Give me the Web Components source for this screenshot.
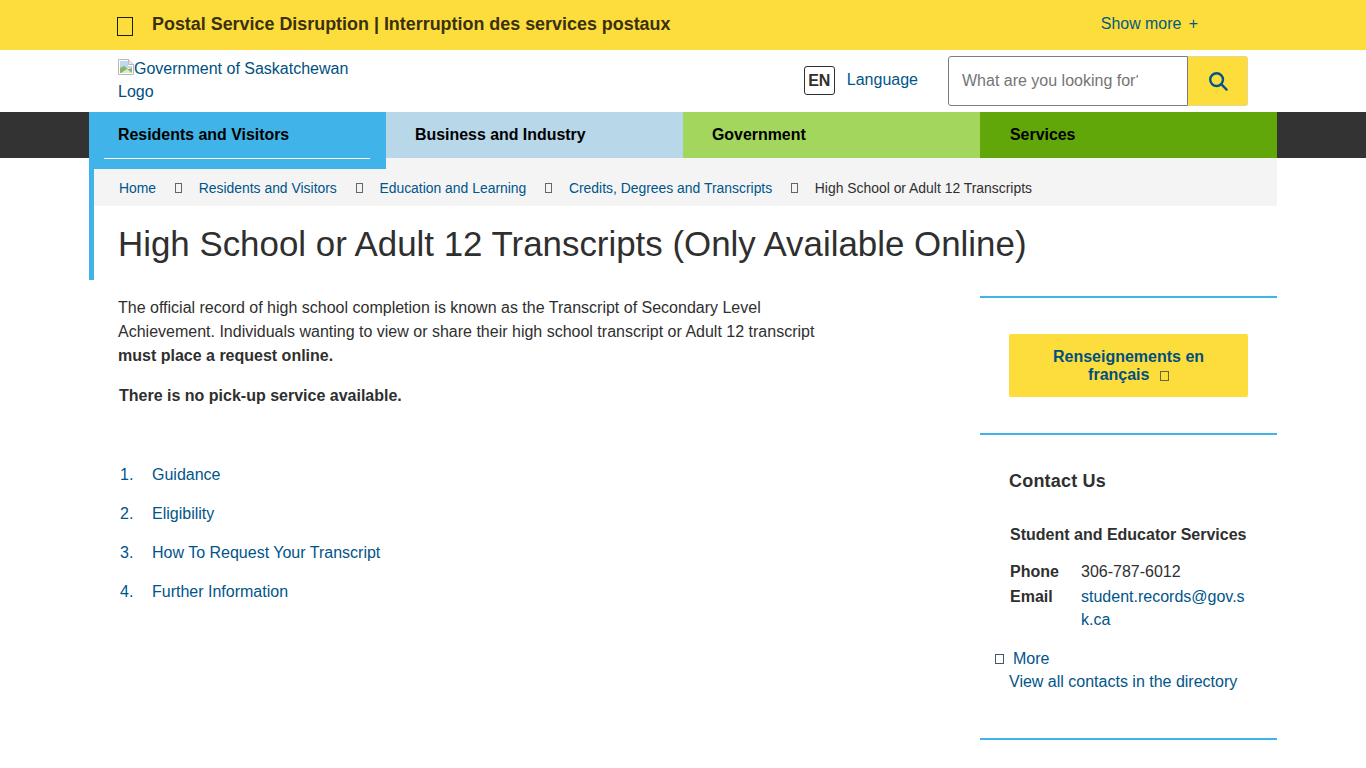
<!DOCTYPE html>
<html lang="en">
<head>
<meta charset="utf-8">
<title>High School or Adult 12 Transcripts</title>
<style>
	html, body {
		margin: 0;
		background: #fff;
		color: #2f2f2f;
		font: 16px/24px "Liberation Sans", Arial, sans-serif;
		height: 768px;
		overflow: hidden;
	}
</style>
</head>
<body>
<gov-alert></gov-alert>
<gov-header></gov-header>
<gov-nav></gov-nav>
<gov-title></gov-title>
<gov-main>
	<gov-article></gov-article>
	<gov-sidebar slot="side"></gov-sidebar>
</gov-main>

<script>
const define = (name, html) => {
	customElements.define(name, class extends HTMLElement {
		constructor() {
			super()
			this.attachShadow({mode: 'open'}).innerHTML = html
		}
	})
}

// missing-glyph box, the icon font of the original did not load
define('tofu-box', `
	<style>
		:host {
			display: inline-block;
			box-sizing: border-box;
			width: var(--w, 8px);
			height: var(--h, 11px);
			border: 1px solid currentColor;
			vertical-align: -1px;
		}
	</style>
`)

define('gov-alert', `
	<style>
		:host {
			display: flex;
			align-items: center;
			height: 48px;
			padding: 0 168px 2px 117px;
			background: #fddd3c;
		}
		tofu-box {
			--w: 16px;
			--h: 19px;
			color: #1d1d00;
			margin: 4px 19px 0 0;
		}
		b {
			flex: 1;
			font-size: 17.92px;
			color: #3a3113;
		}
		a {
			color: #005a80;
			font-size: 15.92px;
		}
		span { margin-left: 3px; }
	</style>
	<tofu-box></tofu-box>
	<b>Postal Service Disruption | Interruption des services postaux</b>
	<a>Show more <span>+</span></a>
`)

define('gov-header', `
	<style>
		:host {
			display: flex;
			align-items: flex-start;
			height: 62px;
			padding: 0 118px;
			color: #00558a;
		}
		.logo {
			width: 240px;
			line-height: 23px;
			padding-top: 7px;
			color: #00507f;
		}
		.logo svg { vertical-align: -1px; }
		.lang {
			display: flex;
			align-items: center;
			margin-left: auto;
			padding-top: 16px;
		}
		.en {
			box-sizing: border-box;
			width: 31px;
			height: 29px;
			border: 1px solid #2f2f2f;
			border-radius: 3px;
			font-weight: bold;
			line-height: 27px;
			text-align: center;
			color: #2f2f2f;
		}
		.lang a {
			margin: -2px 30px 0 12px;
			color: #00558a;
		}
		.search {
			display: flex;
			margin-top: 6px;
		}
		input {
			box-sizing: border-box;
			width: 240px;
			height: 50px;
			padding: 0 49px 0 13px;
			border: 1px solid #7c7c84;
			border-radius: 3px 0 0 3px;
			outline: 0;
			font: inherit;
		}
		input::placeholder { color: #757575; opacity: 1; }
		button {
			width: 60px;
			height: 50px;
			padding: 0;
			border: 1px solid #e6d78a;
			border-left: 0;
			border-radius: 0 3px 3px 0;
			background: #fddd3c;
		}
		button svg { display: block; margin: 0 auto; }
	</style>
	<div class="logo"><svg width="16" height="16" viewBox="0 0 16 16"><path d="M.5.5h10l5 5v10H.5z" fill="#fff" stroke="#b9b9b9"/><path d="M10.5.5v5h5" fill="#e8e8e8" stroke="#b9b9b9"/><path d="M2 2h8v5h4v2H2z" fill="#c3d5f0"/><path d="M2 14V9l4-2 4 3 4-1v5z" fill="#86b862"/><path d="M3 14l6-4 5 4z" fill="#dfe8d3"/></svg>Government of Saskatchewan Logo</div>
	<div class="lang"><div class="en">EN</div><a>Language</a></div>
	<div class="search">
		<input placeholder="What are you looking for?">
		<button aria-label="Search"><svg width="20" height="20" viewBox="0 0 20 20" fill="none" stroke="#00558a" stroke-width="2.4"><circle cx="8.6" cy="8.6" r="6.4"/><path d="M13.2 13.2l5.4 5.4" stroke-linecap="round"/></svg></button>
	</div>
`)

define('gov-nav', `
	<style>
		:host {
			display: flex;
			height: 46px;
			padding: 0 89px;
			background: #333;
			position: relative;
			z-index: 1;
		}
		a {
			flex: 0 0 297px;
			box-sizing: border-box;
			height: 46px;
			padding-left: 29px;
			font-weight: bold;
			font-size: 15.92px;
			line-height: 45px;
			color: #000;
		}
		.active {
			height: 57px;
			background: #40b4e8;
			padding: 0 16px 0 15px;
		}
		.active span {
			display: block;
			height: 47px;
			padding-left: 14px;
			box-sizing: border-box;
			border-bottom: 1px solid #fff;
		}
		.biz { background: #b8d7e9; }
		.gov { background: #a2d65c; }
		.srv { background: #62a70a; padding-left: 30px; }
	</style>
	<a class="active"><span>Residents and Visitors</span></a>
	<a class="biz">Business and Industry</a>
	<a class="gov">Government</a>
	<a class="srv">Services</a>
`)

define('gov-title', `
	<style>
		:host {
			display: block;
			margin: 0 89px;
			height: 122px;
			border-left: 5px solid #40b4e8;
		}
		nav {
			display: flex;
			align-items: center;
			box-sizing: border-box;
			height: 48px;
			padding: 12px 0 0 25px;
			background: #f4f4f4;
			font-size: 13.92px;
			color: #2f2f2f;
		}
		a { color: #00558a; }
		tofu-box {
			--w: 7px;
			--h: 10px;
			margin: 0 16.6px 0 19px;
			color: #666;
		}
		h1 {
			margin: 18px 0 0 24px;
			font-size: 34.88px;
			font-weight: normal;
			line-height: 40px;
		}
	</style>
	<nav>
		<a>Home</a><tofu-box></tofu-box>
		<a>Residents and Visitors</a><tofu-box></tofu-box>
		<a>Education and Learning</a><tofu-box></tofu-box>
		<a>Credits, Degrees and Transcripts</a><tofu-box></tofu-box>
		<span>High School or Adult 12 Transcripts</span>
	</nav>
	<h1>High School or Adult 12 Transcripts (Only Available Online)</h1>
`)

define('gov-main', `
	<style>
		:host {
			display: flex;
			justify-content: space-between;
			padding: 16px 89px 0 118px;
		}
		slot[name=side] { display: block; }
	</style>
	<slot></slot>
	<slot name="side"></slot>
`)

define('gov-article', `
	<style>
		:host {
			display: block;
			width: 720px;
		}
		p { margin: 0 0 16px; }
		ol {
			margin: 55px 0 0;
			padding: 0;
			list-style: none;
			counter-reset: n;
		}
		li {
			counter-increment: n;
			display: flex;
			height: 24px;
			margin-bottom: 15px;
		}
		li::before {
			content: counter(n) ".";
			width: 34px;
			padding-left: 2px;
			box-sizing: border-box;
			color: #00558a;
		}
		a { color: #00558a; }
		.gap { padding-left: 1px; }
	</style>
	<p>The official record of high school completion is known as the Transcript of Secondary Level Achievement. Individuals wanting to view or share their high school transcript or Adult 12 transcript <b>must place a request online.</b></p>
	<p class="gap"><b>There is no pick-up service available.</b></p>
	<ol>
		<li><a>Guidance</a></li>
		<li><a>Eligibility</a></li>
		<li><a>How To Request Your Transcript</a></li>
		<li><a>Further Information</a></li>
	</ol>
`)

define('gov-sidebar', `
	<style>
		:host {
			display: block;
			width: 297px;
		}
		section {
			border-top: 2px solid #40b4e8;
			padding: 0 29px;
		}
		.fr { height: 137px; padding-top: 36px; box-sizing: border-box; }
		.btn {
			box-sizing: border-box;
			width: 239px;
			height: 63px;
			padding: 14px 30px 0;
			border-radius: 2px;
			background: #fddd3c;
			color: #00507f;
			font-weight: bold;
			line-height: 18px;
			text-align: center;
		}
		.btn tofu-box {
			--w: 9px;
			--h: 10px;
			margin-left: 6px;
			color: #5f6a35;
		}
		.contact { height: 305px; box-sizing: border-box; padding-top: 34px; }
		h2 {
			margin: 0 0 30px;
			font-size: 18px;
			line-height: 24px;
			letter-spacing: .2px;
		}
		h3 {
			margin: 0 0 13px 1px;
			font-size: 16px;
			line-height: 24px;
		}
		dl {
			display: grid;
			grid-template-columns: 71px 166px;
			margin: 0 0 0 1px;
		}
		dt { font-weight: bold; }
		dd { margin: 0; }
		dd a { color: #00558a; word-break: break-all; line-height: 23px; display: block; }
		.phone { margin-bottom: 1px; }
		.more {
			margin-top: 16px;
			line-height: 23px;
			color: #00558a;
		}
		.more tofu-box {
			--w: 9px;
			--h: 10px;
			color: #44566a;
			vertical-align: 0;
			margin: 0 9px 0 -14px;
		}
		.end { height: 0; padding: 0; }
	</style>
	<section class="fr">
		<div class="btn">Renseignements en français <tofu-box></tofu-box></div>
	</section>
	<section class="contact">
		<h2>Contact Us</h2>
		<h3>Student and Educator Services</h3>
		<dl>
			<dt class="phone">Phone</dt><dd class="phone">306-787-6012</dd>
			<dt>Email</dt><dd><a>student.records@gov.sk.ca</a></dd>
		</dl>
		<div class="more"><tofu-box></tofu-box>More<br>View all contacts in the directory</div>
	</section>
	<section class="end"></section>
`)
</script>
</body>
</html>
